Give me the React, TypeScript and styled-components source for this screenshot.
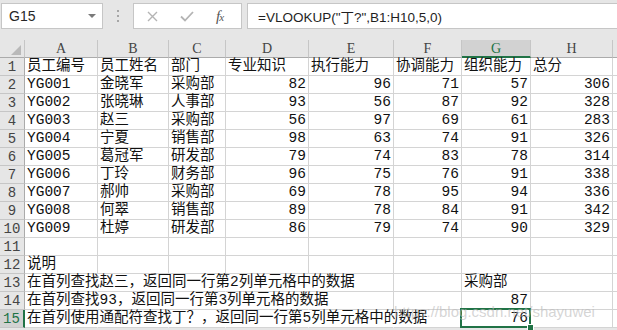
import React from 'react'
import styled, { createGlobalStyle } from 'styled-components'

const GlobalStyle = createGlobalStyle`
  html, body {
    margin: 0;
    padding: 0;
    background: #ffffff;
  }
`

const GREEN = '#217346'
const GRID = '#d4d4d4'

const Sheet = styled.div`
  position: relative;
  width: 617px;
  height: 330px;
  overflow: hidden;
  background: #e6e6e6;
  font-family: "Liberation Mono", "Noto Sans CJK SC", monospace;
`

const FormulaBar = styled.div`
  display: flex;
  align-items: flex-start;
  height: 40px;
  padding: 3px 0 0 1px;
  box-sizing: border-box;
`

const NameBox = styled.div`
  display: flex;
  align-items: center;
  justify-content: space-between;
  width: 102px;
  height: 26px;
  box-sizing: border-box;
  padding: 0 6px 0 7px;
  background: #fff;
  border: 1px solid #c6c6c6;
  font-family: "Liberation Sans", Arial, sans-serif;
  font-size: 14px;
  color: #262626;
`

const DropArrow = styled.span`
  width: 0;
  height: 0;
  border-left: 4px solid transparent;
  border-right: 4px solid transparent;
  border-top: 4px solid #7a7a7a;
`

const Grip = styled.div`
  display: flex;
  flex-direction: column;
  align-items: center;
  justify-content: center;
  gap: 3px;
  width: 30px;
  height: 26px;
  & > span {
    width: 2px;
    height: 2px;
    background: #a6a6a6;
  }
`

const ButtonBox = styled.div`
  display: flex;
  align-items: center;
  width: 109px;
  height: 26px;
  box-sizing: border-box;
  background: #fff;
  border: 1px solid #c6c6c6;
  padding-left: 13px;
  gap: 22px;
`

const Fx = styled.span`
  font-family: "Liberation Serif", "Times New Roman", serif;
  font-style: italic;
  font-size: 15px;
  color: #555;
  letter-spacing: -1px;
  & > small {
    font-size: 11px;
  }
`

const FormulaInput = styled.div`
  flex: 1;
  height: 26px;
  box-sizing: border-box;
  margin-left: 5px;
  padding-left: 10px;
  display: flex;
  align-items: center;
  background: #fff;
  border: 1px solid #c6c6c6;
  border-right: none;
  font-family: "Liberation Sans", "Noto Sans CJK SC", sans-serif;
  font-size: 13.5px;
  color: #1f1f1f;
  white-space: nowrap;
`

const Grid = styled.div`
  display: grid;
  grid-template-columns: 25px 73px 71px 57px 83px 85px 68px 69px 82px 1fr;
  grid-auto-rows: 18px;
  background: #fff;
`

const Corner = styled.div`
  position: relative;
  background: #e6e6e6;
  border-right: 1px solid #c6c6c6;
  border-bottom: 1px solid #ababab;
  & > svg {
    position: absolute;
    right: 3px;
    bottom: 2px;
  }
`

const ColHead = styled.div<{ $selected?: boolean }>`
  display: flex;
  align-items: center;
  justify-content: center;
  box-sizing: border-box;
  background: ${(p) => (p.$selected ? '#d2d2d2' : '#e6e6e6')};
  color: ${(p) => (p.$selected ? GREEN : '#444')};
  border-right: 1px solid #c6c6c6;
  border-bottom: ${(p) => (p.$selected ? `2px solid ${GREEN}` : '1px solid #ababab')};
  font-family: "Liberation Serif", serif;
  font-size: 14px;
  padding-top: 1px;
`

const RowHead = styled.div<{ $selected?: boolean }>`
  display: flex;
  align-items: center;
  justify-content: center;
  box-sizing: border-box;
  background: ${(p) => (p.$selected ? '#d2d2d2' : '#e6e6e6')};
  color: ${(p) => (p.$selected ? GREEN : '#444')};
  border-right: ${(p) => (p.$selected ? `2px solid ${GREEN}` : '1px solid #ababab')};
  border-bottom: 1px solid #c6c6c6;
  font-family: "Liberation Mono", monospace;
  font-size: 14px;
`

const Cell = styled.div<{ $align?: 'left' | 'right'; $open?: boolean; $active?: boolean }>`
  position: relative;
  display: flex;
  align-items: flex-end;
  justify-content: ${(p) => (p.$align === 'right' ? 'flex-end' : 'flex-start')};
  box-sizing: border-box;
  padding: 0 2px 0 2px;
  border-right: 1px solid ${(p) => (p.$open ? 'transparent' : GRID)};
  border-bottom: 1px solid ${GRID};
  font-size: 14.5px;
  line-height: 17px;
  color: #111;
  white-space: nowrap;
  overflow: visible;
  min-width: 0;

  ${(p) =>
    p.$active &&
    `
    &::after {
      content: '';
      position: absolute;
      left: -2px;
      top: -2px;
      right: -1px;
      bottom: -1px;
      border: 2px solid ${GREEN};
      pointer-events: none;
    }
    &::before {
      content: '';
      position: absolute;
      right: -4px;
      bottom: -4px;
      width: 5px;
      height: 5px;
      background: ${GREEN};
      border: 1px solid #fff;
      z-index: 2;
    }
  `}
`

const Watermark = styled.div`
  position: absolute;
  left: 394px;
  top: 303px;
  font-family: "Liberation Sans", Arial, sans-serif;
  font-size: 15px;
  color: rgba(185, 185, 185, 0.6);
  white-space: nowrap;
  pointer-events: none;
`

const columns = ['A', 'B', 'C', 'D', 'E', 'F', 'G', 'H', '']

type Value = string | number | null
type RowDef = { cells: Value[]; open?: number }

const rows: RowDef[] = [
  { cells: ['员工编号', '员工姓名', '部门', '专业知识', '执行能力', '协调能力', '组织能力', '总分'] },
  { cells: ['YG001', '金晓军', '采购部', 82, 96, 71, 57, 306] },
  { cells: ['YG002', '张晓琳', '人事部', 93, 56, 87, 92, 328] },
  { cells: ['YG003', '赵三', '采购部', 56, 97, 69, 61, 283] },
  { cells: ['YG004', '宁夏', '销售部', 98, 63, 74, 91, 326] },
  { cells: ['YG005', '葛冠军', '研发部', 79, 74, 83, 78, 314] },
  { cells: ['YG006', '丁玲', '财务部', 96, 75, 76, 91, 338] },
  { cells: ['YG007', '郝帅', '采购部', 69, 78, 95, 94, 336] },
  { cells: ['YG008', '何翠', '销售部', 89, 78, 84, 91, 342] },
  { cells: ['YG009', '杜婷', '研发部', 86, 79, 74, 90, 329] },
  { cells: [] },
  { cells: ['说明'] },
  { cells: ['在首列查找赵三，返回同一行第2列单元格中的数据', null, null, null, null, null, '采购部'], open: 4 },
  { cells: ['在首列查找93，返回同一行第3列单元格的数据', null, null, null, null, null, 87], open: 4 },
  { cells: ['在首列使用通配符查找丁？，返回同一行第5列单元格中的数据', null, null, null, null, null, 76], open: 5 },
]

function App() {
  return (
    <Sheet>
      <GlobalStyle />
      <FormulaBar>
        <NameBox>
          G15
          <DropArrow />
        </NameBox>
        <Grip>
          <span />
          <span />
          <span />
        </Grip>
        <ButtonBox>
          <svg width="11" height="11" viewBox="0 0 11 11">
            <path d="M1 1 L10 10 M10 1 L1 10" stroke="#b4b4b4" strokeWidth="1.4" fill="none" />
          </svg>
          <svg width="14" height="11" viewBox="0 0 14 11">
            <path d="M1 5.5 L5 9.5 L13 1" stroke="#b4b4b4" strokeWidth="1.8" fill="none" />
          </svg>
          <Fx>
            f<small>x</small>
          </Fx>
        </ButtonBox>
        <FormulaInput>=VLOOKUP("丁?",B1:H10,5,0)</FormulaInput>
      </FormulaBar>

      <Grid>
        <Corner>
          <svg width="10" height="10" viewBox="0 0 10 10">
            <polygon points="10,0 10,10 0,10" fill="#b9b9b9" />
          </svg>
        </Corner>
        {columns.map((c, i) => (
          <ColHead key={`h-${i}`} $selected={c === 'G'}>
            {c}
          </ColHead>
        ))}

        {rows.map((row, r) => (
          <React.Fragment key={`r-${r}`}>
            <RowHead $selected={r === 14}>{r + 1}</RowHead>
            {columns.map((_, c) => {
              const v = row.cells[c] ?? null
              return (
                <Cell
                  key={`c-${r}-${c}`}
                  $align={typeof v === 'number' ? 'right' : 'left'}
                  $open={row.open !== undefined && c < row.open}
                  $active={r === 14 && c === 6}
                >
                  {v}
                </Cell>
              )
            })}
          </React.Fragment>
        ))}
      </Grid>

      <Watermark>https://blog.csdn.net/shayuwei</Watermark>
    </Sheet>
  )
}

export default App
